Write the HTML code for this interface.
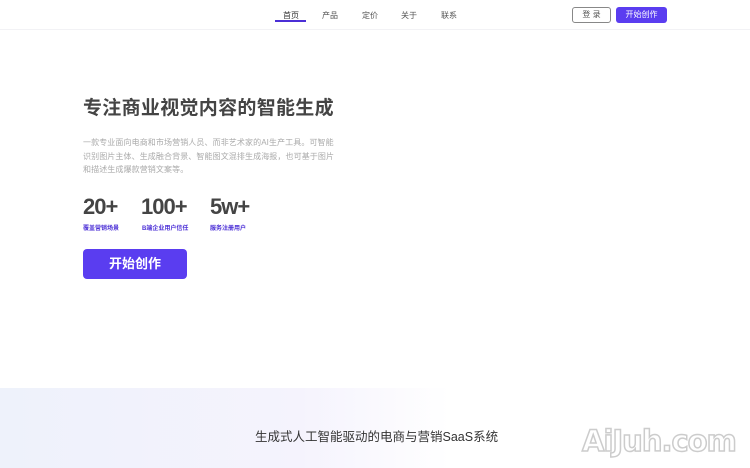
<!DOCTYPE html>
<html><head><meta charset="utf-8"><style>
*{margin:0;padding:0;box-sizing:border-box}
body{width:750px;height:468px;overflow:hidden;background:#fff;font-family:"Liberation Sans","Noto Sans CJK SC",sans-serif;position:relative}
.nav{position:absolute;top:0;left:0;width:750px;height:30px;border-bottom:1px solid #f2f2f5}
.nav a{position:absolute;top:10px;font-size:8px;color:#555;}
.ul{position:absolute;left:275px;top:20px;width:31px;height:2px;background:#4b2fd6}
.login{position:absolute;left:572px;top:7px;width:39px;height:16px;border:1px solid #888;border-radius:3px;font-size:8px;color:#555;text-align:center;line-height:14px}
.start{position:absolute;left:616px;top:7px;width:51px;height:16px;background:#5a3df0;border-radius:3px;font-size:8px;color:#fff;text-align:center;line-height:16px}
h1{position:absolute;left:83px;top:93px;font-size:19px;color:#444;font-weight:bold;letter-spacing:0.3px}
.desc{position:absolute;left:83px;top:136px;width:256px;font-size:8px;line-height:13.5px;color:#aaa;letter-spacing:0.1px}
.num{position:absolute;top:194px;font-size:22px;color:#444;letter-spacing:-1px;font-weight:bold}
.lab{position:absolute;top:223px;font-size:6px;color:#4b2fd6;font-weight:bold}
.btn{position:absolute;left:83px;top:249px;width:104px;height:30px;background:#5a3df0;border-radius:4px;color:#fff;font-size:13px;font-weight:bold;text-align:center;line-height:29px}
.bot{position:absolute;left:0;top:388px;width:750px;height:80px;background:linear-gradient(90deg,#eef2fb 0%,#f5f3fd 40%,#fff 60%)}
.sub{position:absolute;left:255px;top:426px;font-size:12.5px;color:#333}
.wm{position:absolute;left:582px;top:424px;font-size:29px;color:#fff;-webkit-text-stroke:1.5px #ccc;font-family:"DejaVu Sans",sans-serif;font-weight:bold;letter-spacing:-1px}
</style></head><body>
<div class="nav">
<a style="left:283px;color:#333">首页</a><a style="left:322px">产品</a><a style="left:362px">定价</a><a style="left:401px">关于</a><a style="left:441px">联系</a>
<div class="ul"></div>
<div class="login">登 录</div><div class="start">开始创作</div>
</div>
<h1>专注商业视觉内容的智能生成</h1>
<div class="desc">一款专业面向电商和市场营销人员、而非艺术家的AI生产工具。可智能识别图片主体、生成融合背景、智能图文混排生成海报，也可基于图片和描述生成爆款营销文案等。</div>
<div class="num" style="left:83px">20+</div><div class="num" style="left:141px">100+</div><div class="num" style="left:210px">5w+</div>
<div class="lab" style="left:83px">覆盖营销场景</div><div class="lab" style="left:142px">B端企业用户信任</div><div class="lab" style="left:210px">服务注册用户</div>
<div class="btn">开始创作</div>
<div class="bot"></div>
<div class="sub">生成式人工智能驱动的电商与营销SaaS系统</div>
<div class="wm">AiJuh.com</div>
</body></html>
